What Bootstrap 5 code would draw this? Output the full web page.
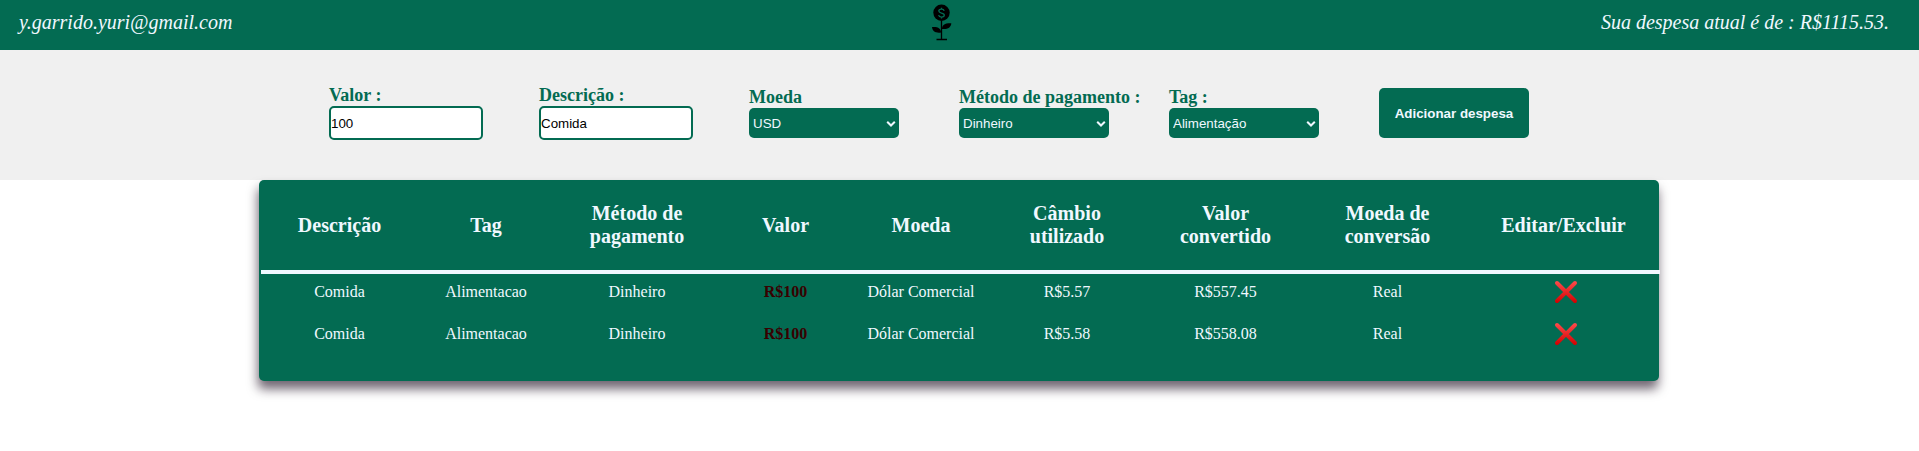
<!DOCTYPE html>
<html lang="pt-BR">
<head>
<meta charset="utf-8">
<meta name="viewport" content="width=device-width, initial-scale=1">
<title>Carteira</title>
<link href="https://cdn.jsdelivr.net/npm/bootstrap@5.3.0/dist/css/bootstrap.min.css" rel="stylesheet">
<style>
:root { --verde: #036b52; --claro: #f0f8ff; }
body { font-family: "Liberation Serif", serif; font-size: 16px; line-height: 18px; color: #000; background: #fff; }
.topo { height: 50px; background: var(--verde); color: var(--claro); font-size: 20px; font-style: italic; line-height: 23px; padding: 0 30px 5px 19px; }
.topo > span { flex: 1 1 0; }
.flor { width: 34px; height: 45px; margin-right: 24px; }
.formulario { height: 130px; background: #f0f0f0; padding-left: 329px; }
.campo { width: 210px; height: 51px; margin-top: 37px; color: var(--verde); }
.campo label { font-size: 18px; font-weight: 700; line-height: 20px; padding-bottom: 1px; white-space: nowrap; }
.campo.texto { margin-top: 35px; height: 55px; }
.campo input, .campo select, .botao { font-family: "Liberation Sans", sans-serif; font-size: 13.333px; border-radius: 5px; line-height: normal; }
.campo input { width: 154px; height: 34px; border: 2px solid var(--verde); padding: 1px 0; color: #000; background: #fff; }
.campo select { appearance: none; width: 150px; height: 30px; border: 0; padding: 0 16px 0 4px; color: var(--claro); background: var(--verde) url("data:image/svg+xml,%3Csvg xmlns='http://www.w3.org/2000/svg' width='10' height='8'%3E%3Cpath d='M1.2 1.700 5 5.500 8.800 1.700' fill='none' stroke='%23f0f8ff' stroke-width='2'/%3E%3C/svg%3E") no-repeat 137px 12px; }
.botao { width: 150px; height: 50px; margin-top: 38px; border: 0; background: var(--verde); color: var(--claro); font-weight: 700; }
.quadro { width: 1400px; height: 201px; background: var(--verde); border-radius: 5px; padding-left: 2px; margin-left: 259px; box-shadow: -1px 8px 11px rgba(24, 8, 28, .62); }
.quadro table { width: 1399px; table-layout: fixed; border-collapse: separate; border-spacing: 0; color: var(--claro); text-align: center; }
.quadro th { height: 94px; padding: 0 20px; border-bottom: 4px solid var(--claro); font-size: 20px; line-height: 23px; vertical-align: middle; text-align: center; }
.quadro td { height: 42px; padding: 9px 0 0; vertical-align: top; }
.quadro .preco { color: #380000; font-weight: 700; }
.excluir { display: block; width: 24px; height: 24px; margin: -3px auto 0; position: relative; left: 2px; }
</style>
</head>
<body class="min-vh-100">
<header class="topo d-flex align-items-center">
  <span>y.garrido.yuri@gmail.com</span>
  <svg class="flor" viewBox="0 0 34 45" aria-hidden="true">
    <circle cx="16.5" cy="12.800" r="8.2"/>
    <path d="M16.500 21v18.500M11.500 39.500h10.500" fill="none" stroke="#000" stroke-width="1.300"/>
    <path d="M17 29c0-4 3-6 9.300-5.700-.3 4.500-4 6.300-9.300 5.700ZM16 32.500c.2-4-3-6-9-5.500.4 4.500 4 6.300 9 5.500Z"/>
    <path d="M19.200 10.900c-.3-1.200-1.300-1.700-2.700-1.700-1.600 0-2.700.7-2.700 1.900 0 2.600 5.500 1.300 5.500 4 0 1.200-1.200 2-2.800 2-1.500 0-2.600-.6-2.900-1.900M16.500 7.700v1.500M16.500 17.100v1.500" fill="none" stroke="#036b52" stroke-width="1.300"/>
  </svg>
  <span class="text-end">Sua despesa atual é de : R$1115.53.</span>
</header>
<form class="formulario d-flex align-items-start">
  <div class="campo texto d-flex flex-column align-items-start"><label for="valor">Valor :</label><input id="valor" value="100"></div>
  <div class="campo texto d-flex flex-column align-items-start"><label for="descricao">Descrição :</label><input id="descricao" value="Comida"></div>
  <div class="campo d-flex flex-column align-items-start"><label for="moeda">Moeda</label><select id="moeda"><option>USD</option></select></div>
  <div class="campo d-flex flex-column align-items-start"><label for="metodo">Método de pagamento :</label><select id="metodo"><option>Dinheiro</option></select></div>
  <div class="campo d-flex flex-column align-items-start"><label for="tag">Tag :</label><select id="tag"><option>Alimentação</option></select></div>
  <button class="botao" type="button">Adicionar despesa</button>
</form>
<svg width="0" height="0" class="d-block" aria-hidden="true">
  <defs><linearGradient id="vermelho" gradientUnits="userSpaceOnUse" x1="0" y1="1" x2="0" y2="23"><stop offset="0" stop-color="#ff4b4b"/><stop offset="1" stop-color="#d10000"/></linearGradient></defs>
  <symbol id="xis" viewBox="0 0 24 24"><path d="M3 3l18 18M21 3L3 21" stroke="url(#vermelho)" stroke-width="4" stroke-linecap="round"/></symbol>
</svg>
<main class="quadro">
  <table>
    <colgroup><col style="width:157px"><col style="width:136px"><col style="width:166px"><col style="width:131px"><col style="width:140px"><col style="width:152px"><col style="width:165px"><col style="width:159px"><col style="width:193px"></colgroup>
    <thead><tr><th>Descrição</th><th>Tag</th><th>Método de pagamento</th><th>Valor</th><th>Moeda</th><th>Câmbio utilizado</th><th>Valor convertido</th><th>Moeda de conversão</th><th>Editar/Excluir</th></tr></thead>
    <tbody>
      <tr><td>Comida</td><td>Alimentacao</td><td>Dinheiro</td><td class="preco">R$100</td><td>Dólar Comercial</td><td>R$5.57</td><td>R$557.45</td><td>Real</td><td><svg class="excluir" role="img" aria-label="Excluir"><use href="#xis"/></svg></td></tr>
      <tr><td>Comida</td><td>Alimentacao</td><td>Dinheiro</td><td class="preco">R$100</td><td>Dólar Comercial</td><td>R$5.58</td><td>R$558.08</td><td>Real</td><td><svg class="excluir" role="img" aria-label="Excluir"><use href="#xis"/></svg></td></tr>
    </tbody>
  </table>
</main>
<script src="https://cdn.jsdelivr.net/npm/bootstrap@5.3.0/dist/js/bootstrap.bundle.min.js"></script>
</body>
</html>
